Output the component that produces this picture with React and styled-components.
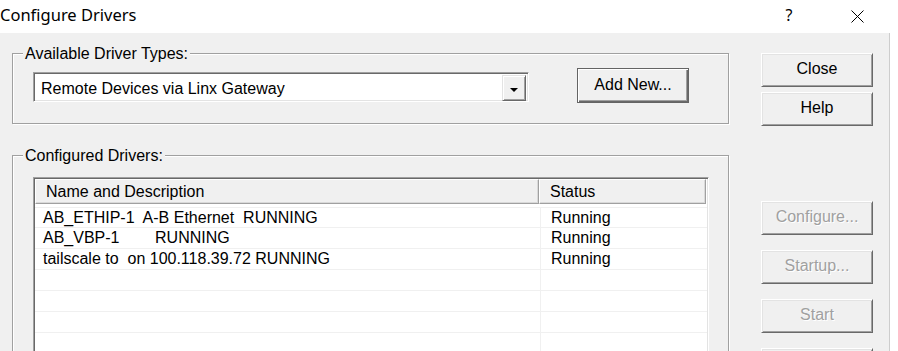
import React from 'react';
import styled, { createGlobalStyle } from 'styled-components';

const GlobalStyle = createGlobalStyle`
  html, body { margin: 0; padding: 0; background: #fff; }
  body {
    font-family: "Liberation Sans", Arial, sans-serif;
    font-size: 16px;
    color: #000;
    overflow: hidden;
  }
  * { box-sizing: border-box; }
`;

const Window = styled.div`
  width: 898px;
  height: 351px;
  display: flex;
  flex-direction: column;
  background: #fff;
  overflow: hidden;
`;

const TitleBar = styled.div`
  height: 33px;
  flex: none;
  display: flex;
  align-items: flex-start;
  padding-top: 5px;
  background: #fff;
`;

const Title = styled.div`
  flex: 1;
  font-family: "Noto Sans", "Segoe UI", sans-serif;
  font-size: 16.5px;
  line-height: 20px;
  color: #000;
`;

const CaptionButtons = styled.div`
  display: flex;
  gap: 10px;
  padding-right: 12px;
  margin-top: -5px;
`;

const CaptionButton = styled.div`
  width: 58px;
  height: 33px;
  display: flex;
  align-items: flex-start;
  justify-content: center;
  padding-top: 5px;
  font-family: "Noto Sans", "Segoe UI", sans-serif;
  font-size: 16px;
  line-height: 20px;
  color: #000;
  svg { margin-top: 5px; }
`;

const Client = styled.div`
  flex: 1;
  min-height: 0;
  display: flex;
  background: #fff;
`;

const Dialog = styled.div`
  width: 890px;
  background: #f0f0f0;
  border-right: 1px solid #cdcdcd;
  display: flex;
  gap: 32px;
  padding: 11px 0 0 12px;
  overflow: hidden;
`;

const LeftColumn = styled.div`
  width: 717px;
  flex: none;
  display: flex;
  flex-direction: column;
  gap: 22px;
`;

const Group = styled.fieldset`
  margin: 0;
  padding: 0;
  min-width: 0;
  width: 717px;
  border: 1px solid #a0a0a0;
  box-shadow: inset 1px 1px 0 #fff, 1px 1px 0 #fff;
`;

const Legend = styled.legend`
  margin-left: 10px;
  padding: 0 2px;
  font-size: 16px;
  line-height: 19px;
  background: #f0f0f0;
`;

const TypeRow = styled.div`
  display: flex;
  align-items: flex-start;
  gap: 48px;
  padding: 5px 0 20px 20px;
`;

const Combo = styled.div`
  width: 496px;
  height: 30px;
  margin-top: 4px;
  display: flex;
  padding: 2px;
  background: #fff;
  border: 1px solid;
  border-color: #a0a0a0 #fff #fff #a0a0a0;
  box-shadow: inset 1px 1px 0 #696969, inset -1px -1px 0 #e3e3e3;
`;

const ComboText = styled.div`
  flex: 1;
  padding-left: 5px;
  line-height: 27px;
  white-space: nowrap;
`;

const DropButton = styled.div`
  width: 24px;
  height: 26px;
  display: flex;
  align-items: center;
  justify-content: center;
  padding-top: 3px;
  background: #f0f0f0;
  border: 1px solid;
  border-color: #e3e3e3 #696969 #696969 #e3e3e3;
  box-shadow: inset 1px 1px 0 #fff, inset -1px -1px 0 #a0a0a0;
`;

const Button = styled.button`
  width: 112px;
  height: ${p => (p.$tall ? 35 : 34)}px;
  padding: 0 0 2px;
  flex: none;
  font-family: "Liberation Sans", Arial, sans-serif;
  font-size: 16px;
  background: #f0f0f0;
  color: ${p => (p.disabled ? '#a0a0a0' : '#000')};
  text-shadow: ${p => (p.disabled ? '1px 1px 0 #fff' : 'none')};
  border: 1px solid;
  border-color: ${p => (p.$default ? '#646464' : '#fff #696969 #696969 #fff')};
  box-shadow: ${p =>
    p.$default
      ? 'inset 1px 1px 0 #fff, inset -1px -1px 0 #696969, inset -2px -2px 0 #a0a0a0'
      : 'inset 1px 1px 0 #e3e3e3, inset -1px -1px 0 #a0a0a0'};
  cursor: default;
`;

const ListArea = styled.div`
  padding: 12px 0 0 20px;
`;

const ListView = styled.div`
  width: 676px;
  height: 220px;
  padding: 1px;
  background: #fff;
  border: 1px solid;
  border-color: #a0a0a0 #fff #fff #a0a0a0;
  box-shadow: inset 1px 1px 0 #696969, inset -1px -1px 0 #e3e3e3;
  overflow: hidden;
`;

const HeaderRow = styled.div`
  display: grid;
  grid-template-columns: 504px 167px;
`;

const HeaderCell = styled.div`
  height: 25px;
  padding-left: 10px;
  line-height: 23px;
  background: #f0f0f0;
  border: 1px solid;
  border-color: #fff #a0a0a0 #a0a0a0 #fff;
  box-shadow: inset -1px -1px 0 #d9d9d9;
  white-space: nowrap;
`;

const Body = styled.div`
  padding-top: 3px;
`;

const Row = styled.div`
  display: grid;
  grid-template-columns: 506px 1fr;
  height: 21px;
  border-bottom: 1px solid #f0f0f0;
  border-top: ${p => (p.$first ? '1px solid #f0f0f0' : 'none')};
`;

const Cell = styled.div`
  padding-left: ${p => (p.$status ? 10 : 8)}px;
  line-height: 20px;
  white-space: pre;
  overflow: hidden;
  border-right: ${p => (p.$status ? 'none' : '1px solid #f0f0f0')};
`;

const RightColumn = styled.div`
  width: 112px;
  flex: none;
  display: flex;
  flex-direction: column;
  padding-top: 9px;
`;

const ButtonStack = styled.div`
  display: flex;
  flex-direction: column;
  gap: ${p => p.$gap}px;
  margin-top: ${p => p.$offset || 0}px;
`;

const rows = [
  ['AB_ETHIP-1  A-B Ethernet  RUNNING', 'Running'],
  ['AB_VBP-1        RUNNING', 'Running'],
  ['tailscale to  on 100.118.39.72 RUNNING', 'Running'],
  ['', ''],
  ['', ''],
  ['', ''],
  ['', ''],
  ['', ''],
  ['', ''],
];

export default function App() {
  return (
    <>
      <GlobalStyle />
      <Window>
        <TitleBar>
          <Title>Configure Drivers</Title>
          <CaptionButtons>
            <CaptionButton>?</CaptionButton>
            <CaptionButton>
              <svg width="13" height="13" viewBox="0 0 13 13">
                <path d="M0.5 0.5 L12.5 12.5 M12.5 0.5 L0.5 12.5" stroke="#000" strokeWidth="1" fill="none" />
              </svg>
            </CaptionButton>
          </CaptionButtons>
        </TitleBar>
        <Client>
          <Dialog>
            <LeftColumn>
              <Group>
                <Legend>Available Driver Types:</Legend>
                <TypeRow>
                  <Combo>
                    <ComboText>Remote Devices via Linx Gateway</ComboText>
                    <DropButton>
                      <svg width="8" height="4" viewBox="0 0 8 4">
                        <path d="M0 0 H8 L4 4 Z" fill="#000" />
                      </svg>
                    </DropButton>
                  </Combo>
                  <Button $default $tall>Add New...</Button>
                </TypeRow>
              </Group>
              <Group>
                <Legend>Configured Drivers:</Legend>
                <ListArea>
                  <ListView>
                    <HeaderRow>
                      <HeaderCell>Name and Description</HeaderCell>
                      <HeaderCell>Status</HeaderCell>
                    </HeaderRow>
                    <Body>
                      {rows.map((r, i) => (
                        <Row key={i} $first={i === 0}>
                          <Cell>{r[0]}</Cell>
                          <Cell $status>{r[1]}</Cell>
                        </Row>
                      ))}
                    </Body>
                  </ListView>
                </ListArea>
              </Group>
            </LeftColumn>
            <RightColumn>
              <ButtonStack $gap={5}>
                <Button>Close</Button>
                <Button>Help</Button>
              </ButtonStack>
              <ButtonStack $gap={15} $offset={75}>
                <Button disabled>Configure...</Button>
                <Button disabled>Startup...</Button>
                <Button disabled>Start</Button>
                <Button disabled aria-label="Stop" />
              </ButtonStack>
            </RightColumn>
          </Dialog>
        </Client>
      </Window>
    </>
  );
}
